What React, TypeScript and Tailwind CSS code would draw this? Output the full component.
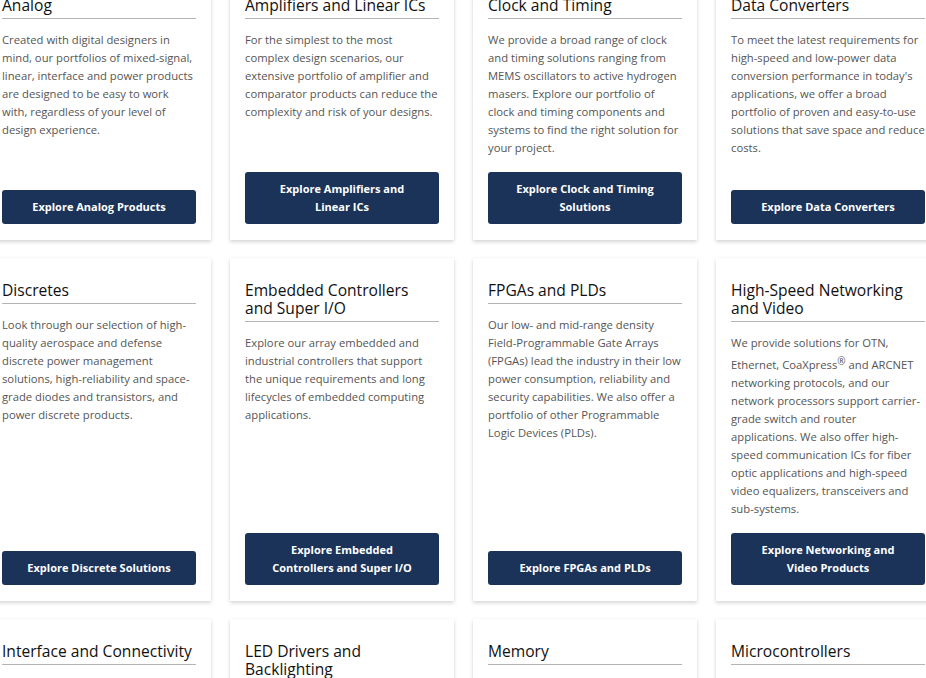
import type { ReactNode } from "react";

interface Category {
  title: string;
  body: ReactNode;
  cta: string;
}

const CATEGORIES: Category[] = [
  {
    title: "Analog",
    body: "Created with digital designers in mind, our portfolios of mixed-signal, linear, interface and power products are designed to be easy to work with, regardless of your level of design experience.",
    cta: "Explore Analog Products",
  },
  {
    title: "Amplifiers and Linear ICs",
    body: "For the simplest to the most complex design scenarios, our extensive portfolio of amplifier and comparator products can reduce the complexity and risk of your designs.",
    cta: "Explore Amplifiers and Linear ICs",
  },
  {
    title: "Clock and Timing",
    body: "We provide a broad range of clock and timing solutions ranging from MEMS oscillators to active hydrogen masers. Explore our portfolio of clock and timing components and systems to find the right solution for your project.",
    cta: "Explore Clock and Timing Solutions",
  },
  {
    title: "Data Converters",
    body: "To meet the latest requirements for high-speed and low-power data conversion performance in today's applications, we offer a broad portfolio of proven and easy-to-use solutions that save space and reduce costs.",
    cta: "Explore Data Converters",
  },
  {
    title: "Discretes",
    body: "Look through our selection of high-quality aerospace and defense discrete power management solutions, high-reliability and space-grade diodes and transistors, and power discrete products.",
    cta: "Explore Discrete Solutions",
  },
  {
    title: "Embedded Controllers and Super I/O",
    body: "Explore our array embedded and industrial controllers that support the unique requirements and long lifecycles of embedded computing applications.",
    cta: "Explore Embedded Controllers and Super I/O",
  },
  {
    title: "FPGAs and PLDs",
    body: "Our low- and mid-range density Field-Programmable Gate Arrays (FPGAs) lead the industry in their low power consumption, reliability and security capabilities. We also offer a portfolio of other Programmable Logic Devices (PLDs).",
    cta: "Explore FPGAs and PLDs",
  },
  {
    title: "High-Speed Networking and Video",
    body: (
      <>
        We provide solutions for OTN, Ethernet, CoaXpress
        <sup className="top-0 align-[4px] text-[10px] leading-[18px]">®</sup> and ARCNET
        networking protocols, and our network processors support carrier-grade switch and
        router applications. We also offer high-speed communication ICs for fiber optic
        applications and high-speed video equalizers, transceivers and sub-systems.
      </>
    ),
    cta: "Explore Networking and Video Products",
  },
  {
    title: "Interface and Connectivity",
    body: "Our interface and connectivity products help you connect devices reliably across a wide range of protocols.",
    cta: "Explore Interface Products",
  },
  {
    title: "LED Drivers and Backlighting",
    body: "Drive LEDs efficiently in lighting and display applications with our broad driver portfolio.",
    cta: "Explore LED Drivers",
  },
  {
    title: "Memory",
    body: "Our serial and parallel memory products offer the reliability your designs require.",
    cta: "Explore Memory Products",
  },
  {
    title: "Microcontrollers",
    body: "Find the right 8-, 16- and 32-bit microcontroller for your next embedded design.",
    cta: "Explore Microcontrollers",
  },
];

function CategoryCard({ title, body, cta }: Category) {
  return (
    <div className="flex flex-col bg-white px-[15px] pt-[23px] pb-[16px] shadow-[0_2px_4px_rgba(0,0,0,0.16),0_0_1px_rgba(0,0,0,0.08)]">
      <h3 className="border-b border-[#b4b4b4] pb-[4px] text-[15.6px] leading-[18px] font-normal text-[#111]">
        {title}
      </h3>
      <p className="mt-[12px] mb-[15px] text-[11.25px] leading-[18px] text-[#555]">{body}</p>
      <a
        href="#"
        className="mt-auto block rounded-[3px] bg-[#1c3359] px-[22px] py-[8px] text-center text-[11px] leading-[18px] font-bold text-white"
      >
        {cta}
      </a>
    </div>
  );
}

export default function App() {
  return (
    <div className="h-[678px] w-[926px] overflow-hidden bg-white font-['Open_Sans',sans-serif]">
      <div className="-mt-[27px] -ml-[13px] grid w-[953px] grid-cols-[repeat(4,224px)] gap-x-[19px] gap-y-[18px]">
        {CATEGORIES.map((category) => (
          <CategoryCard key={category.title} {...category} />
        ))}
      </div>
    </div>
  );
}
